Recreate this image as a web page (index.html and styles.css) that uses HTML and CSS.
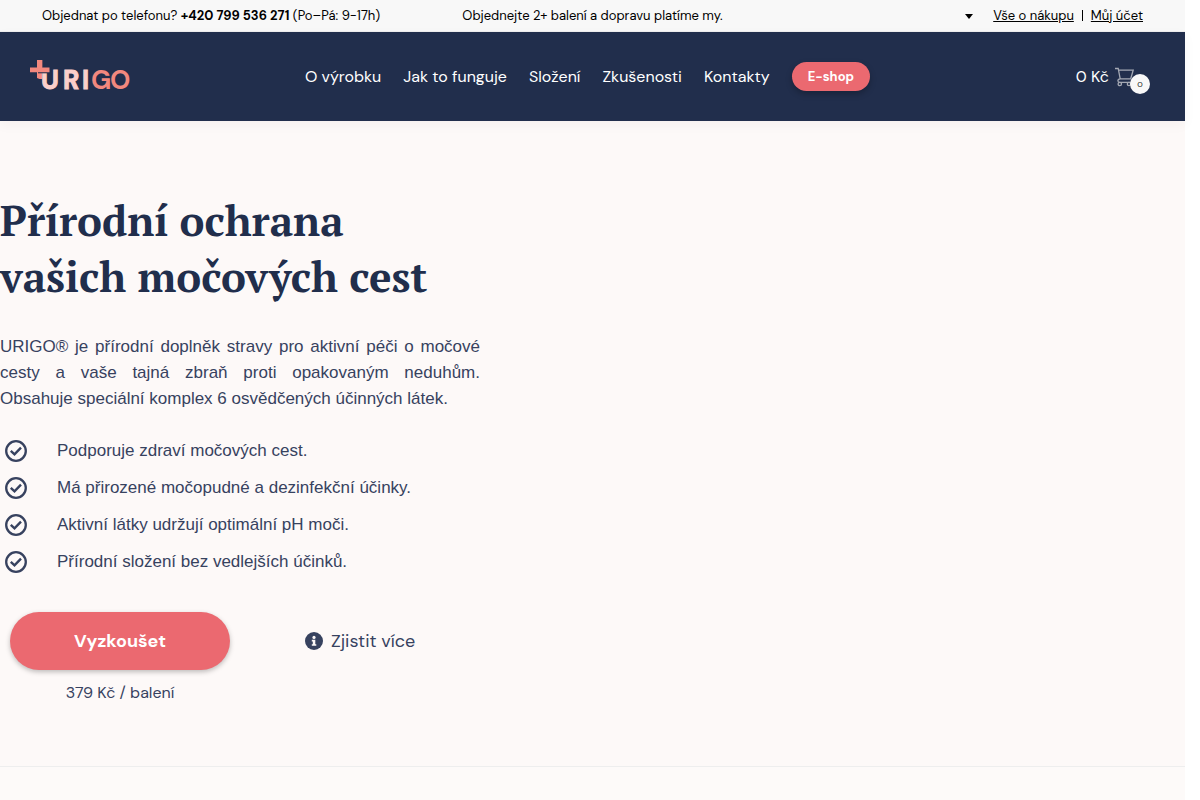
FILE: index.html
```
<!DOCTYPE html>
<html lang="cs">
<head>
<meta charset="utf-8">
<meta name="viewport" content="width=device-width, initial-scale=1">
<title>URIGO</title>
<link rel="stylesheet" href="styles.css">
</head>
<body>
<svg class="sprite" aria-hidden="true">
  <symbol id="check" viewBox="0 0 22 22">
    <circle cx="11" cy="11" r="9.8" fill="none" stroke="currentColor" stroke-width="2.3"/>
    <path d="M5.800 10.900l3.700 3.500 6.500-6.800" fill="none" stroke="currentColor" stroke-width="2.4"/>
  </symbol>
</svg>
<div class="topbar">
  <p class="phone">Objednat po telefonu? <strong>+420 799 536 271</strong> (Po–Pá: 9-17h)</p>
  <p class="shipping">Objednejte 2+ balení a dopravu platíme my.</p>
  <div class="account">
    <span class="currency"><select aria-label="Měna"><option></option></select></span>
    <a href="#">Vše o nákupu</a><span class="divider"></span><a href="#">Můj účet</a>
  </div>
</div>
<header class="header">
  <a class="logo" href="#" aria-label="URIGO">
    <svg width="102" height="34" viewBox="0 0 102 34">
      <path d="M7 0h5.200v19H9.500L7 18z" fill="#f2887e"/>
      <text class="logo-text" y="29"><tspan class="logo-light" x="11 33 52">URI</tspan><tspan class="logo-coral" x="61 80">GO</tspan></text>
      <path d="M8 7.500h11.500v5.800H8z" fill="#212e4c"/>
      <path d="M0 7.500h7V0h5.200v7.500h7.300v4.800H0z" fill="#f2887e"/>
    </svg>
  </a>
  <nav class="nav">
    <a href="#">O výrobku</a>
    <a href="#">Jak to funguje</a>
    <a href="#">Složení</a>
    <a href="#">Zkušenosti</a>
    <a href="#">Kontakty</a>
    <a class="shop" href="#">E-shop</a>
  </nav>
  <a class="cart" href="#">
    <span>0 Kč</span>
    <span class="cart-icon">
      <svg width="20" height="20" viewBox="0 0 20 20" fill="none" stroke="#a5a9b4" stroke-width="1.300">
        <path d="M0 1.500h3.200l2 10.300h10.500l2.500-8.700H3.600M5.200 11.800c-2 .2-2.300 1-2.300 2s.6 1.500 1.600 1.500H17"/>
        <circle cx="4.800" cy="17" r="1.700"/><circle cx="14" cy="17" r="1.700"/>
      </svg>
      <span class="badge">0</span>
    </span>
  </a>
</header>
<main>
  <section class="hero">
    <h1>Přírodní ochrana<br>vašich močových cest</h1>
    <p class="lead">URIGO® je přírodní doplněk stravy pro aktivní péči o močové cesty a vaše tajná zbraň proti opakovaným neduhům. Obsahuje speciální komplex 6 osvědčených účinných látek.</p>
    <ul class="benefits">
      <li><svg><use href="#check"/></svg>Podporuje zdraví močových cest.</li>
      <li><svg><use href="#check"/></svg>Má přirozené močopudné a dezinfekční účinky.</li>
      <li><svg><use href="#check"/></svg>Aktivní látky udržují optimální pH moči.</li>
      <li><svg><use href="#check"/></svg>Přírodní složení bez vedlejších účinků.</li>
    </ul>
    <div class="actions">
      <div class="buy">
        <a class="try" href="#">Vyzkoušet</a>
        <p class="price">379 Kč / balení</p>
      </div>
      <a class="more" href="#">
        <svg width="18" height="18" viewBox="0 0 18 18"><circle cx="9" cy="9" r="9" fill="currentColor"/><circle cx="9" cy="5.400" r="1.600" fill="#fdf9f8"/><path d="M6.800 7.800h3.500v4.400h1v1.600H6.800v-1.600h1V9.400h-1z" fill="#fdf9f8"/></svg>
        Zjistit více
      </a>
    </div>
  </section>
  <section class="next"></section>
</main>
</body>
</html>
```
FILE: styles.css
```
* { box-sizing: border-box; }

body {
  margin: 0;
  padding-right: 15px;
  min-height: 100vh;
  display: flex;
  flex-direction: column;
  background: #fff;
  color: #37425f;
  font-family: "DM Sans", Inter, sans-serif;
}

p, h1, ul { margin: 0; padding: 0; }
a { color: inherit; text-decoration: none; }
.sprite { position: absolute; width: 0; height: 0; }

.topbar {
  display: grid;
  grid-template-columns: 1fr auto 1fr;
  align-items: center;
  height: 32px;
  padding: 0 42px;
  background: #f8f8f8;
  border-bottom: 1px solid #eee;
  color: #000;
  font-size: 13px;
}
.account { display: flex; justify-content: flex-end; align-items: center; }
.account a { text-decoration: underline; }
.divider { width: 1px; height: 11px; margin: 0 8px; background: #000; }
.currency { position: relative; width: 8px; height: 20px; margin-right: 20px; }
.currency select {
  appearance: none;
  width: 8px;
  height: 20px;
  padding: 0;
  border: 0;
  background: transparent;
}
.currency::after {
  content: "";
  position: absolute;
  top: 8px;
  left: 0;
  border: 4px solid transparent;
  border-top: 5px solid #000;
  border-bottom: 0;
  pointer-events: none;
}

.header {
  position: relative;
  display: grid;
  grid-template-columns: 1fr auto 1fr;
  align-items: center;
  height: 89px;
  padding: 0 35px 0 25px;
  background: #212e4c;
  color: #fff;
  box-shadow: 0 4px 12px rgba(60, 30, 20, 0.04);
}
.logo { padding-left: 5px; }
.logo svg { display: block; overflow: visible; }
.logo-text { font: 700 26px "DM Sans", Lato, sans-serif; stroke-width: 1; }
.logo-light { fill: #fbcfcb; stroke: #fbcfcb; }
.logo-coral { fill: #f2887e; stroke: #f2887e; stroke-width: 0; }
.nav { display: flex; align-items: center; gap: 22px; font-size: 16px; }
.shop {
  padding: 0 16px;
  border-radius: 15px;
  background: #eb6970;
  box-shadow: 0 3px 6px rgba(0, 0, 0, 0.25);
  font-size: 13px;
  font-weight: 700;
  line-height: 29px;
}
.cart { display: flex; justify-self: end; align-items: center; gap: 6px; font-size: 16px; }
.cart-icon { position: relative; width: 35px; height: 20px; }
.badge {
  position: absolute;
  top: 7px;
  right: 0;
  width: 20px;
  height: 20px;
  border-radius: 50%;
  background: #f8f8f8;
  color: #222;
  font-size: 8px;
  line-height: 20px;
  text-align: center;
}

main { display: flex; flex: 1; flex-direction: column; }
.hero { padding: 71px 0 62px; background: #fdf9f8; }
h1 {
  color: #212e4c;
  font: 700 42px/56px "PT Serif", "Liberation Serif", serif;
}
.lead {
  max-width: 480px;
  margin-top: 30px;
  font: 17px/26px "Liberation Sans", Arial, sans-serif;
  text-align: justify;
}
.benefits {
  display: grid;
  gap: 15px;
  margin-top: 28px;
  list-style: none;
  font: 17px/22px "Liberation Sans", Arial, sans-serif;
}
.benefits li { display: flex; align-items: center; gap: 30px; padding-left: 5px; }
.benefits svg { width: 22px; height: 22px; }
.actions { display: flex; gap: 75px; margin-top: 39px; padding-left: 10px; }
.buy { width: 220px; text-align: center; }
.try {
  display: block;
  border-radius: 29px;
  background: #eb6970;
  box-shadow: 0 2px 5px rgba(0, 0, 0, 0.25);
  color: #fff;
  font-size: 18px;
  font-weight: 700;
  line-height: 58px;
}
.price { margin-top: 12px; font-size: 16px; line-height: 22px; }
.more { display: flex; align-items: center; gap: 8px; height: 58px; font-size: 18px; }
.next { flex: 1; min-height: 34px; border-top: 1px solid #eee; background: #fdfaf9; }
```
